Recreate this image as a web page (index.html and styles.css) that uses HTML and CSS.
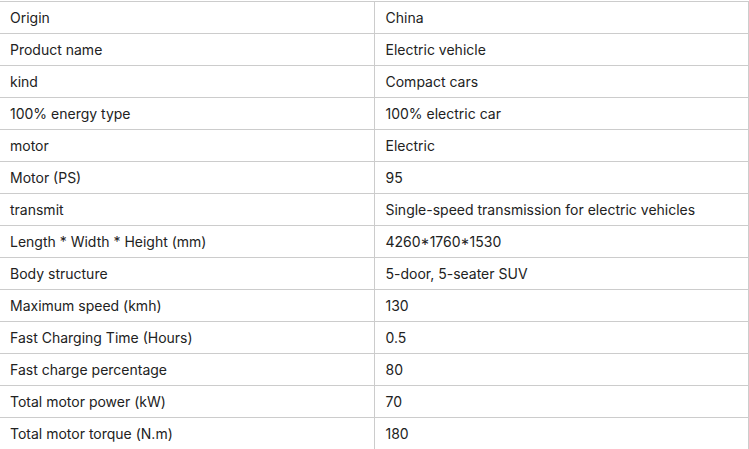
FILE: index.html
```html
<!DOCTYPE html>
<html>
<head>
<meta charset="utf-8">
<link rel="stylesheet" href="styles.css">
</head>
<body>
<div class="wrap">
<table class="spec">
<tbody>
<tr><td>Origin</td><td>China</td></tr>
<tr><td>Product name</td><td>Electric vehicle</td></tr>
<tr><td>kind</td><td>Compact cars</td></tr>
<tr><td>100% energy type</td><td>100% electric car</td></tr>
<tr><td>motor</td><td>Electric</td></tr>
<tr><td>Motor (PS)</td><td>95</td></tr>
<tr><td>transmit</td><td>Single-speed transmission for electric vehicles</td></tr>
<tr><td>Length * Width * Height (mm)</td><td>4260*1760*1530</td></tr>
<tr><td>Body structure</td><td>5-door, 5-seater SUV</td></tr>
<tr><td>Maximum speed (kmh)</td><td>130</td></tr>
<tr><td>Fast Charging Time (Hours)</td><td>0.5</td></tr>
<tr><td>Fast charge percentage</td><td>80</td></tr>
<tr><td>Total motor power (kW)</td><td>70</td></tr>
<tr><td>Total motor torque (N.m)</td><td>180</td></tr>
</tbody>
</table>
</div>
</body>
</html>
```
FILE: styles.css
```css
html, body {
  margin: 0;
  padding: 0;
  background: #fff;
}
.wrap {
  padding-top: 1px;
  width: 749px;
}
.spec {
  border-collapse: collapse;
  width: 749px;
  table-layout: fixed;
  font-family: Inter, "Noto Sans", sans-serif;
  font-size: 14px;
  color: #222;
}
.spec td {
  padding: 0 0 0 10px;
  border-top: 1px solid #ccc;
  border-bottom: 1px solid #ccc;
  border-right: 1px solid #ccc;
  vertical-align: middle;
  box-sizing: border-box;
  height: 32px;
}
.spec td:first-child {
  width: 374px;
}
.spec td:last-child {
  padding-left: 11px;
}
```
